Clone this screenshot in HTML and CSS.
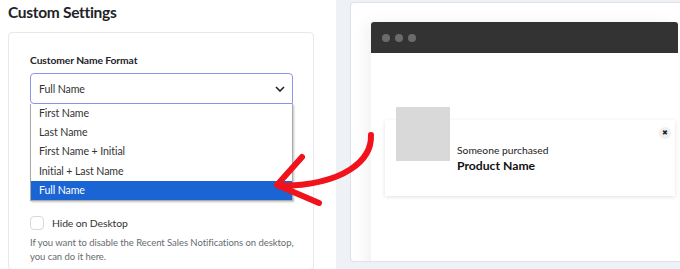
FILE: index.html
```html
<!DOCTYPE html>
<html>
<head>
<meta charset="utf-8">
<link rel="stylesheet" href="styles.css">
</head>
<body>
<div class="page">
  <section class="left">
    <h2 class="title">Custom Settings</h2>
    <div class="card">
      <div class="label">Customer Name Format</div>
      <div class="select">
        <span>Full Name</span>
        <svg class="chev" width="10" height="6" viewBox="0 0 10 6"><path d="M1 1l4 4 4-4" fill="none" stroke="#222" stroke-width="1.6"/></svg>
      </div>
      <ul class="options">
        <li>First Name</li>
        <li>Last Name</li>
        <li>First Name + Initial</li>
        <li>Initial + Last Name</li>
        <li class="selected">Full Name</li>
      </ul>
      <label class="check">
        <span class="box"></span>
        <span>Hide on Desktop</span>
      </label>
      <p class="desc">If you want to disable the Recent Sales Notifications on desktop, you can do it here.</p>
    </div>
  </section>
  <section class="right">
    <div class="window">
      <div class="bar"><i></i><i></i><i></i></div>
      <div class="screen">
        <div class="notice">
          <div class="thumb"></div>
          <div class="ntext">
            <div class="who">Someone purchased</div>
            <div class="prod">Product Name</div>
          </div>
          <span class="close">&#x2716;</span>
        </div>
      </div>
    </div>
  </section>
  <svg class="arrow" width="680" height="269" viewBox="0 0 680 269">
    <path d="M371 135 C 372 160, 345 185, 280 186" fill="none" stroke="#f0131c" stroke-width="6" stroke-linecap="round"/>
    <path d="M302 157 L 277 185 L 319 203" fill="none" stroke="#f0131c" stroke-width="6" stroke-linecap="round" stroke-linejoin="round"/>
  </svg>
</div>
</body>
</html>
```

FILE: styles.css
```css
* { box-sizing: border-box; }
html, body { margin: 0; padding: 0; }
body {
  width: 680px;
  height: 269px;
  overflow: hidden;
  background: #eef1f5;
  font-family: Lato, "Noto Sans", sans-serif;
  color: #1d2327;
}
.page {
  position: relative;
  display: flex;
  height: 269px;
}
.left {
  width: 336px;
  flex: none;
  background: #fff;
  padding: 0 22px 0 8px;
}
.title {
  margin: 0;
  padding-top: 1px;
  font-size: 15.5px;
  font-weight: 700;
  line-height: 22px;
  letter-spacing: -0.3px;
  color: #1d2327;
}
.card {
  margin-top: 9px;
  border: 1px solid #e6e8eb;
  border-radius: 4px;
  padding: 21px 0 0 21px;
  height: 238px;
}
.label {
  font-size: 10.3px;
  font-weight: 700;
  line-height: 13px;
  letter-spacing: -0.1px;
  color: #1d2327;
}
.select {
  margin-top: 6px;
  height: 31px;
  width: 263px;
  border: 1px solid #8f95ea;
  border-radius: 4px 4px 0 4px;
  display: flex;
  align-items: center;
  justify-content: space-between;
  padding: 0 7px 0 8px;
  font-size: 10.6px;
  letter-spacing: -0.1px;
  color: #333;
}
.chev { margin-top: 1px; }
.options {
  list-style: none;
  margin: 0;
  padding: 0;
  width: 263px;
  border: 1px solid #a9a9a9;
  border-top: none;
  box-shadow: 1px 1px 2px rgba(0,0,0,0.25);
}
.options li {
  height: 19.2px;
  line-height: 19px;
  padding-left: 8px;
  font-size: 10.6px;
  letter-spacing: -0.1px;
  color: #333;
}
.options li.selected {
  background: #1b64d3;
  color: #fff;
}
.check {
  display: flex;
  align-items: center;
  gap: 8px;
  margin-top: 15px;
  font-size: 10.4px;
  letter-spacing: -0.1px;
  color: #333;
  line-height: 14px;
}
.box {
  width: 14px;
  height: 14px;
  border: 1px solid #d5d8dc;
  border-radius: 4px;
  background: #fff;
}
.desc {
  margin: 6px 0 0;
  font-size: 9.5px;
  line-height: 14px;
  letter-spacing: -0.05px;
  color: #676b70;
  width: 266px;
}
.right {
  flex: 1;
  margin: 2px 0 7px 14px;
  background: #fff;
  border: 1px solid #dfe2e6;
  border-right: none;
  border-radius: 4px 0 0 4px;
  padding: 19px 0 0 20px;
  overflow: hidden;
}
.window {
  width: 307px;
  height: 260px;
  border-radius: 4px 4px 0 0;
  box-shadow: -6px 0 14px rgba(0,0,0,0.05);
}
.bar {
  height: 31px;
  background: #333;
  border-radius: 3px 3px 0 0;
  display: flex;
  align-items: center;
  gap: 5px;
  padding-left: 11px;
}
.bar i {
  width: 8px;
  height: 8px;
  border-radius: 50%;
  background: #6b6b6b;
}
.screen {
  background: #fff;
  height: 229px;
  padding: 67px 0 0 14px;
}
.notice {
  position: relative;
  width: 290px;
  height: 76px;
  background: #fff;
  box-shadow: 0 1px 4px rgba(0,0,0,0.12);
  display: flex;
  align-items: flex-start;
  padding-left: 11px;
}
.thumb {
  width: 54px;
  height: 54px;
  margin-top: -13px;
  background: #d9d9d9;
  flex: none;
}
.ntext {
  margin: 23px 0 0 7px;
}
.who {
  font-size: 10.3px;
  line-height: 14px;
  color: #222;
}
.prod {
  font-size: 12.2px;
  font-weight: 700;
  line-height: 18px;
  color: #111;
}
.close {
  position: absolute;
  top: 7px;
  right: 4px;
  width: 12px;
  height: 12px;
  border-radius: 50%;
  background: #f0f0f0;
  font-size: 7px;
  line-height: 12px;
  text-align: center;
  color: #222;
  font-family: "DejaVu Sans", sans-serif;
}
.arrow {
  position: absolute;
  left: 0;
  top: 0;
  pointer-events: none;
}
```
